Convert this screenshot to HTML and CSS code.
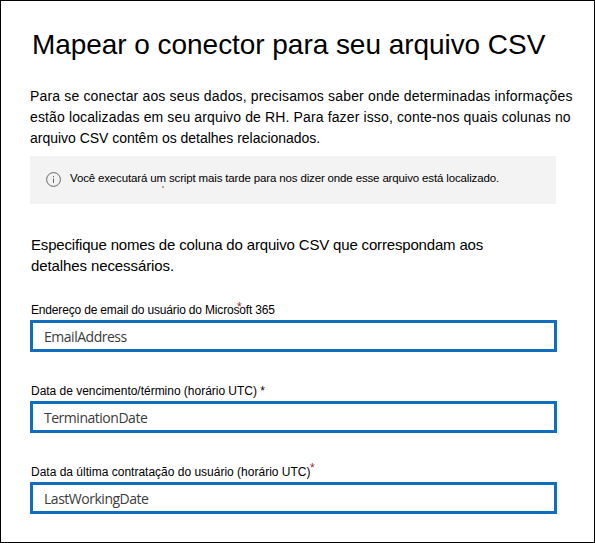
FILE: index.html
```html
<!DOCTYPE html>
<html lang="pt-BR">
<head>
<meta charset="utf-8">
<title>Mapear o conector</title>
<link rel="stylesheet" href="styles.css">
</head>
<body>
<main class="panel">
  <h1 class="title"><span>Mapear o conector para seu arquivo CSV</span></h1>
  <p class="intro">
    <span class="line intro-a">Para se conectar aos seus dados, precisamos saber onde determinadas informações</span>
    <span class="line intro-b">estão localizadas em seu arquivo de RH. Para fazer isso, conte-nos quais colunas no</span>
    <span class="line intro-c">arquivo CSV contêm os detalhes relacionados.</span>
  </p>
  <div class="notice">
    <svg class="notice-icon" width="15" height="15" viewBox="0 0 15 15"><circle cx="7.5" cy="7.5" r="6.9" fill="none" stroke="#666"/><path d="M7.5 4v1.3M7.5 6.5V11" stroke="#666"/></svg>
    <span class="notice-text">Você executará um script mais tarde para nos dizer onde esse arquivo está localizado.</span>
    <i class="speck"></i>
  </div>
  <h2 class="subtitle">
    <span class="line sub-a">Especifique nomes de coluna do arquivo CSV que correspondam aos</span>
    <span class="line sub-b">detalhes necessários.</span>
  </h2>
  <div class="field">
    <label class="label label-a" for="email">Endereço de email do usuário do Microsoft 365<sup class="star over">*</sup></label>
    <input class="input" id="email" value="EmailAddress">
  </div>
  <div class="field">
    <label class="label label-b" for="term">Data de vencimento/término (horário UTC) *</label>
    <input class="input" id="term" value="TerminationDate">
  </div>
  <div class="field">
    <label class="label label-c" for="last">Data da última contratação do usuário (horário UTC)<sup class="star end">*</sup></label>
    <input class="input" id="last" value="LastWorkingDate">
  </div>
</main>
</body>
</html>
```
FILE: styles.css
```css
* { box-sizing: border-box; }
body { margin: 0; background: #fff; color: #000; font-family: "Liberation Sans", Arial, sans-serif; }
.panel { width: 595px; height: 543px; border: 1px solid #000; padding: 26px 22px 0 29px; overflow: hidden; }
.title { margin: 0 0 23px 2px; font-size: 28px; line-height: 36px; font-weight: 400; white-space: nowrap; letter-spacing: -0.05px; }
.line { display: block; white-space: nowrap; }
.intro { margin: 0 0 7px; font-size: 14px; line-height: 21px; }
.intro-a { letter-spacing: 0.16px; }
.intro-b { letter-spacing: 0.13px; }
.intro-c { letter-spacing: -0.02px; }
.notice { position: relative; display: flex; align-items: flex-start; width: 526px; height: 48px; padding: 12px 0 0 16px; background: #f3f3f3; }
.notice-icon { margin: 4px 9px 0 0; flex: none; }
.notice-text { font-size: 11.5px; line-height: 20px; letter-spacing: -0.15px; white-space: nowrap; }
.speck { position: absolute; left: 132px; top: 30px; width: 2px; height: 2px; background: #c69a78; }
.subtitle { margin: 30px 0 26px 1px; font-size: 15px; line-height: 21px; font-weight: 400; }
.sub-a { letter-spacing: -0.17px; }
.sub-b { letter-spacing: -0.1px; }
.field { height: 81px; }
.label { position: relative; display: block; width: max-content; height: 18px; margin-left: 1px; font-size: 12px; line-height: 16px; white-space: nowrap; }
.label-a { letter-spacing: -0.17px; }
.label-b { letter-spacing: -0.02px; }
.input { display: block; width: 527px; height: 32px; margin: 0; padding: 1px 11px 0; border: 3px solid #106ebe; background: #fff; color: #3c3c3c; font: 14px/20px "Open Sans", "Noto Sans", sans-serif; letter-spacing: -0.48px; outline: 0; }
.star { position: absolute; color: #a4262c; font-size: 12px; line-height: 12px; }
.over { left: 206px; top: -1px; }
.end { left: 279px; top: -2px; }
```
